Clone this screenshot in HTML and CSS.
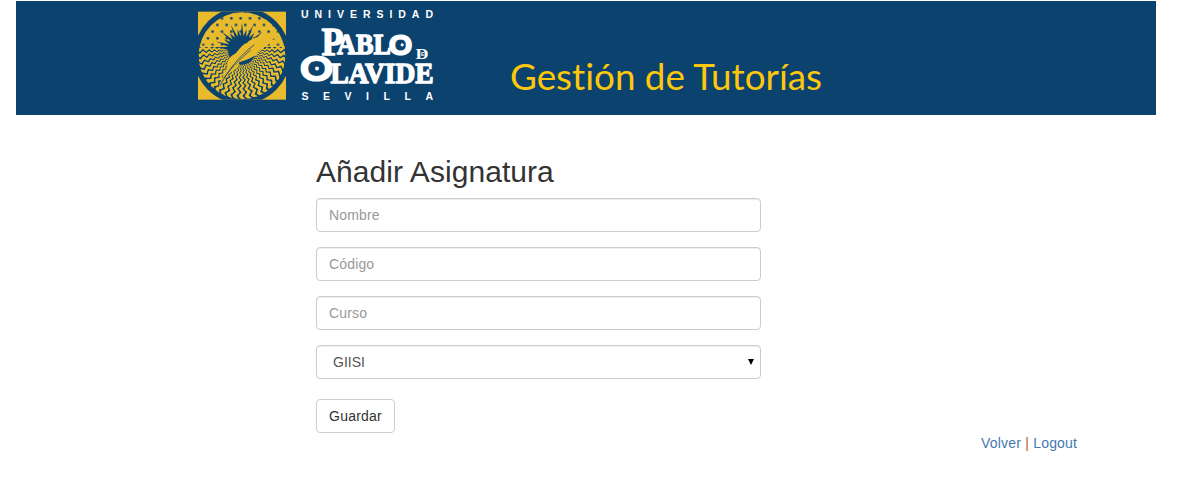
FILE: index.html
```html
<!DOCTYPE html>
<html lang="es">
<head>
<meta charset="utf-8">
<title>Gestión de Tutorías</title>
<link rel="stylesheet" href="styles.css">
</head>
<body>
<header class="banner">
  <svg class="emblem" viewBox="0 0 330 345" aria-hidden="true">
    <defs>
      <pattern id="dots" x="103" y="68" width="28" height="40" patternUnits="userSpaceOnUse">
        <circle cx="7" cy="7" r="4" fill="#0c426e"/>
        <circle cx="21" cy="27" r="4" fill="#0c426e"/>
      </pattern>
      <clipPath id="square"><rect x="24" y="35" width="264" height="264"/></clipPath>
      <clipPath id="disc"><circle cx="156" cy="167" r="130"/></clipPath>
    </defs>
    <rect x="24" y="35" width="264" height="264" fill="#e8bb2d"/>
    <g clip-path="url(#square)"><circle cx="156" cy="167" r="145" fill="#0c426e"/></g>
    <g clip-path="url(#disc)">
      <rect x="24" y="35" width="264" height="106" fill="#e8bb2d"/>
      <rect x="24" y="35" width="264" height="102" fill="url(#dots)"/>
      <g id="waves" fill="none" stroke="#e8bb2d" stroke-linejoin="round"></g>
      <path id="sun" fill="#0c426e"></path>
    </g>
    <path d="M83 268C94 240 100 222 113 205C107 185 120 168 136 161C148 149 157 132 171 129C184 114 214 104 268 105C257 116 250 117 243 119L248 122C231 137 216 148 199 157L207 159C186 174 165 181 147 187C151 199 124 216 109 227C100 239 94 253 83 268Z" fill="#e8bb2d"/>
    <path d="M90 257C116 208 147 169 193 134M101 235C130 196 154 174 182 150" fill="none" stroke="#0c426e" stroke-width="2.4"/>
  </svg>
  <svg class="wordmark" viewBox="0 0 160 115">
    <g class="caps">
      <text x="11" y="18" textLength="132">UNIVERSIDAD</text>
      <text x="11.5" y="99.5" textLength="131.5">SEVILLA</text>
    </g>
    <g class="name">
      <text x="31.5" y="54.6" font-size="41" textLength="22" lengthAdjust="spacingAndGlyphs">P</text>
      <text x="47" y="54.3" font-size="29" textLength="54" lengthAdjust="spacingAndGlyphs">ABL</text>
      <text class="ring" x="99.5" y="53.6" font-size="25" textLength="22" lengthAdjust="spacingAndGlyphs">O</text>
      <text class="ring" x="10.6" y="80" font-size="34" textLength="32" lengthAdjust="spacingAndGlyphs">O</text>
      <text x="40.5" y="82.5" font-size="30" textLength="103" lengthAdjust="spacingAndGlyphs">LAVIDE</text>
    </g>
    <text class="small-d" x="125.5" y="59.3" textLength="13" lengthAdjust="spacingAndGlyphs">D</text>
    <text class="small-e" x="131" y="56">E</text>
    <circle cx="112.2" cy="44.8" r="1.6" fill="#fff"/>
    <circle cx="27" cy="68.5" r="2" fill="#fff"/>
  </svg>
  <svg class="headline" viewBox="0 0 340 114"><text x="10" y="89" textLength="312" lengthAdjust="spacingAndGlyphs">Gestión de Tutorías</text></svg>
</header>
<main class="content">
  <form class="form">
    <h1 class="title">Añadir Asignatura</h1>
    <input class="control" type="text" placeholder="Nombre">
    <input class="control" type="text" placeholder="Código">
    <input class="control" type="text" placeholder="Curso">
    <div class="control select"><span>GIISI</span><svg width="6" height="6" viewBox="0 0 6 6"><path d="M0 0H6L3 6Z"/></svg></div>
    <button class="button" type="button">Guardar</button>
  </form>
  <nav class="links"><a href="#">Volver</a> <span class="bar">|</span> <a href="#">Logout</a></nav>
</main>
<script src="emblem.js"></script>
</body>
</html>
```
FILE: styles.css
```css
* { box-sizing: border-box; }
body {
  margin: 0;
  background: #fff;
  color: #333;
  font: 14px/20px "Liberation Sans", Arial, sans-serif;
}
.banner {
  display: flex;
  width: 1140px;
  height: 114px;
  margin: 1px 0 0 16px;
  padding-left: 174px;
  background: #0c426e;
  overflow: hidden;
}
.emblem, .wordmark, .headline { flex: none; margin-top: -1px; height: 115px; }
.emblem { width: 110px; }
.wordmark { width: 160px; margin-left: -10px; }
.headline { width: 340px; height: 114px; margin: 0 0 0 50px; }
.headline text { font: 36px Lato, sans-serif; font-variant-ligatures: none; fill: #fdc70c; }
.caps text { font: bold 10.5px "Liberation Sans", sans-serif; fill: #fff; }
.name text {
  font-family: "Liberation Serif", serif;
  font-weight: bold;
  fill: #fff;
  stroke: #fff;
  stroke-width: 1.4px;
  stroke-linejoin: round;
}
.name .ring { font-family: "Liberation Sans", sans-serif; font-weight: normal; stroke-width: 3px; }
.small-d { font: bold 15px "Liberation Serif", serif; fill: #fff; }
.small-e { font: bold 5px "Liberation Sans", sans-serif; fill: #fff; }
.content { padding-left: 316px; }
.form { width: 445px; padding-top: 40px; }
.title {
  margin: 0 0 10px;
  font-size: 30px;
  font-weight: 500;
  line-height: 33px;
  letter-spacing: .06px;
}
.control {
  display: block;
  width: 100%;
  height: 34px;
  margin: 0 0 15px;
  padding: 6px 12px;
  border: 1px solid #ccc;
  border-radius: 4px;
  background: #fff;
  box-shadow: inset 0 1px 1px rgba(0, 0, 0, .075);
  color: #555;
  font: inherit;
  letter-spacing: .15px;
}
.control::placeholder { color: #999; opacity: 1; }
.select {
  display: flex;
  align-items: center;
  justify-content: space-between;
  padding: 6px 6px 6px 16px;
  letter-spacing: 0;
}
.button {
  display: block;
  width: 79px;
  height: 34px;
  margin-top: 20px;
  padding: 6px 12px;
  border: 1px solid #ccc;
  border-radius: 4px;
  background: #fff;
  color: #333;
  font: inherit;
  letter-spacing: .22px;
  white-space: nowrap;
}
.links { margin-left: 665px; white-space: nowrap; letter-spacing: .2px; }
.links a { color: #4379b0; text-decoration: none; }
.bar { color: #a8642a; }
```
FILE: emblem.js
```js
// Wavy rays of the sea, radiating from the sun's centre.
const cx = 156, cy = 150;
const waves = document.getElementById("waves");
const count = 24;
for (let i = 0; i <= count; i++) {
  const angle = (-2 + i * 184 / count) * Math.PI / 180;
  let previous = null;
  let side = 1;
  for (let r = 36; r < 170; r += 2 + r * 0.07) {
    const swing = side * r * 0.035;
    const x = cx + r * Math.cos(angle) - swing * Math.sin(angle);
    const y = cy + r * Math.sin(angle) + swing * Math.cos(angle);
    const point = x.toFixed(1) + " " + y.toFixed(1);
    if (previous) {
      const path = document.createElementNS("http://www.w3.org/2000/svg", "path");
      path.setAttribute("d", "M" + previous + "L" + point);
      path.setAttribute("stroke-width", (r * 0.062).toFixed(1));
      path.setAttribute("stroke-linecap", "round");
      waves.appendChild(path);
    }
    previous = point;
    side = -side;
  }
}

// Sun with spikes over the upper half.
let sun = "";
const spikes = 15;
for (let i = 0; i <= spikes * 2; i++) {
  const angle = Math.PI + i * Math.PI / (spikes * 2);
  const r = i % 2 ? (i % 4 === 3 ? 82 : 64) : 42;
  sun += (i ? "L" : "M") + (cx + r * Math.cos(angle)).toFixed(1) + " " + (cy + r * Math.sin(angle)).toFixed(1);
}
sun += "A42 44 0 0 1 " + (cx - 42) + " " + cy + "Z";
document.getElementById("sun").setAttribute("d", sun);
```
